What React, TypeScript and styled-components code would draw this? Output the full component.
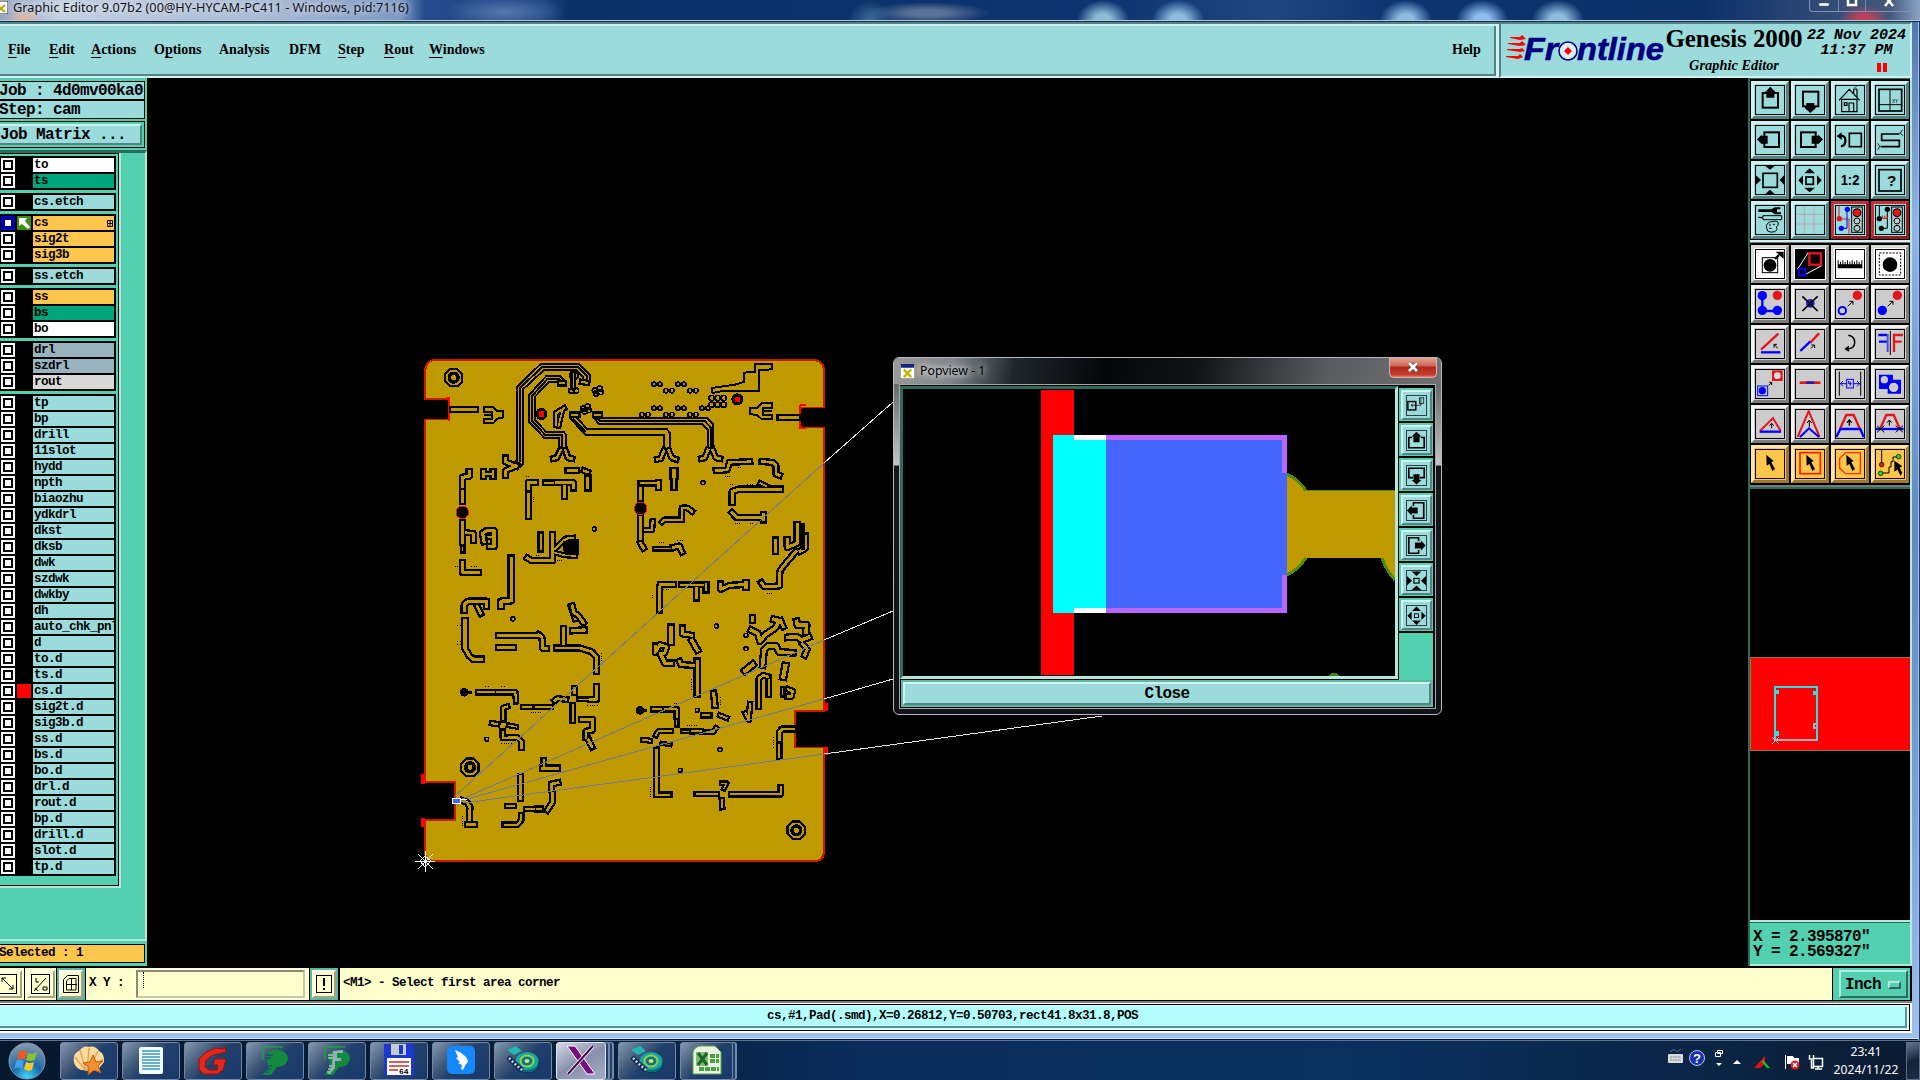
import React from "react";
import styled, { createGlobalStyle, css } from "styled-components";

const MONO = `"Liberation Mono", "DejaVu Sans Mono", monospace`;
const SERIF = `"Liberation Serif", "DejaVu Serif", serif`;
const SANS = `"Noto Sans", "Open Sans", sans-serif`;

const c = {
  cyan: "#9bdbdb",
  cyanHi: "#d0f2f2",
  cyanLo: "#538383",
  teal: "#53d0b0",
  tealMid: "#5cb8a0",
  tealHi: "#b4e8dc",
  tealLo: "#2c6c5c",
  orange: "#ffc64d",
  cream: "#ffffcc",
  gold: "#bf9900",
  red: "#ff0000",
};

const mono7 = css`
  font-family: ${MONO};
  font-weight: bold;
  font-size: 12.6px;
  letter-spacing: -0.56px;
`;
const mono9 = css`
  font-family: ${MONO};
  font-weight: bold;
  font-size: 16px;
  letter-spacing: -0.6px;
`;

const Global = createGlobalStyle`
  html, body { margin: 0; padding: 0; background: #000; overflow: hidden; }
  * { box-sizing: border-box; }
  svg { display: block; flex: none; }
`;

const Screen = styled.div`
  width: 1920px;
  height: 1080px;
  display: flex;
  flex-direction: column;
  overflow: hidden;
  color: #000;
`;

/* ---------- title bar ---------- */
const TitleBar = styled.header`
  height: 22px;
  flex: none;
  display: flex;
  justify-content: space-between;
  border-bottom: 1px solid #122c50;
  box-shadow: inset 0 -1px #b8cbe2;
  background:
    radial-gradient(ellipse 22px 20px at 870px 20px, #3c6c94, transparent),
    radial-gradient(ellipse 62px 11px at 928px 13px, #7484a0c0 30%, transparent),
    radial-gradient(ellipse 26px 20px at 1103px 20px, #8cbcd8 30%, transparent),
    radial-gradient(ellipse 26px 20px at 1178px 20px, #8cbce0 30%, transparent),
    radial-gradient(ellipse 26px 20px at 1406px 20px, #8cbce0 30%, transparent),
    radial-gradient(ellipse 26px 20px at 1482px 20px, #8cbcf0 30%, transparent),
    radial-gradient(ellipse 26px 20px at 1558px 20px, #8cbce0 30%, transparent),
    radial-gradient(ellipse 26px 14px at 1864px 19px, #c04058 20%, transparent),
    radial-gradient(ellipse 18px 12px at 24px 20px, #e8b490, transparent),
    radial-gradient(ellipse 60px 16px at 505px 12px, #5878ac, transparent),
    linear-gradient(90deg, #98a8c4 0, #c4cfe0 60px, #a6b8d4 280px, #7c98c4 400px, #244c8c 425px, #1c4484 545px, #0a3068 570px, #0c3470 1100px, #1e4680 1270px, #0c3470 1400px, #0b3068 1700px, #44587c 1890px, #8ca4c4 1920px);
`;
const TitleText = styled.div`
  display: flex;
  align-items: center;
  height: 14px;
  gap: 5px;
  font: 12.7px/14px ${SANS};
  color: #10151c;
  white-space: nowrap;
  text-shadow: 0 0 6px #ffffffb0, 0 0 8px #ffffff80;
`;
const CaptionButtons = styled.div`
  display: flex;
  width: 104px;
  height: 12px;
  margin-right: 7px;
  border: 1px solid #7c94b4;
  border-top: 0;
  border-radius: 0 0 4px 4px;
`;
const Caption = styled.div<{ $w: number }>`
  width: ${(p) => p.$w}px;
  display: flex;
  justify-content: center;
  border-right: 1px solid #7088a8;
  &:last-child { border: 0; }
`;

/* ---------- window frame ---------- */
const WindowFrame = styled.div`
  height: 1018px;
  flex: none;
  display: flex;
  flex-direction: column;
  padding-right: 8px;
  padding-bottom: 7px;
  background: linear-gradient(180deg, #5078b0, #90b4e8 20%, #6088c0 50%, #7ca4dc 80%, #a0c0f0);
  box-shadow: inset -1px 0 #243c60, inset -2px 0 #a8c4ec, inset 0 -1px #101828, inset 0 -2px #d0e0f8;
`;
const Header = styled.div`
  display: flex;
  height: 56px;
  flex: none;
  background: ${c.cyanLo};
`;
const MenuBar = styled.nav`
  flex: 1;
  display: flex;
  align-items: center;
  margin-top: 2px;
  padding: 0 16px 3px 8px;
  gap: 17px;
  background: ${c.cyan};
  border-top: 2px solid ${c.cyanHi};
  border-right: 3px solid ${c.cyanHi};
  border-bottom: 2px solid ${c.cyanHi};
  box-shadow: inset -2px -2px ${c.cyanLo};
  font: bold 14px/18px ${SERIF};
`;
const MenuItem = styled.span<{ $w: number; $end?: boolean }>`
  width: ${(p) => p.$w}px;
  white-space: nowrap;
  ${(p) => p.$end && css`margin-left: auto;`}
  u { text-underline-offset: 3px; text-decoration-thickness: 1px; text-decoration-skip-ink: none; }
`;
const Brand = styled.div`
  width: 413px;
  display: flex;
  padding: 4px 3px 0 5px;
  background: ${c.cyan};
  border: 2px solid;
  border-color: ${c.cyanLo} ${c.cyanHi} ${c.cyanHi} ${c.cyanLo};
`;
const BrandTitle = styled.div`
  width: 136px;
  display: flex;
  flex-direction: column;
  align-items: center;
  white-space: nowrap;
  strong { font: bold 25px/25px ${SERIF}; letter-spacing: -0.1px; margin-top: -2px; }
  em { font: italic bold 14.4px/20px ${SERIF}; margin-top: 4px; }
`;
const Clock = styled.div`
  flex: 1;
  display: flex;
  flex-direction: column;
  align-items: center;
  ${mono9}
  font-size: 15px;
  letter-spacing: 0;
  font-style: italic;
  line-height: 15px;
  padding-left: 4px;
  white-space: nowrap;
`;
const Pause = styled.div`
  width: 10px;
  height: 9px;
  margin: 5px 0 0 50px;
  border: solid ${c.red};
  border-width: 0 4px;
`;

const Body = styled.div`
  display: flex;
  height: 890px;
  flex: none;
  background: #000;
  padding-bottom: 2px;
`;

/* ---------- left sidebar ---------- */
const Sidebar = styled.aside`
  width: 147px;
  display: flex;
  flex-direction: column;
  background: ${c.teal};
  padding: 3px 0 0;
`;
const InfoBox = styled.div<{ $bg?: string; $small?: boolean }>`
  height: 19px;
  flex: none;
  width: 145px;
  margin-top: ${(p) => (p.$small ? 3 : 0)}px;
  background: ${(p) => p.$bg || c.cyan};
  border: 1px solid #000;
  border-left: 0;
  ${(p) => (p.$small ? mono7 : mono9)}
  line-height: ${(p) => (p.$small ? 16 : 18)}px;
  white-space: pre;
  text-indent: -1px;
`;
const MatrixWrap = styled.div`
  width: 145px;
  height: 27px;
  flex: none;
  margin-top: 2px;
  padding: 2px 2px 2px 0;
  border: 1px solid #000;
  border-left: 0;
`;
const MatrixButton = styled.div`
  height: 21px;
  background: ${c.cyan};
  border: 2px solid;
  border-color: ${c.cyanHi} ${c.cyanLo} ${c.cyanLo} ${c.cyanHi};
  border-left: 0;
  ${mono9}
  line-height: 18px;
  white-space: pre;
`;
const LayerArea = styled.div`
  margin-top: 2px;
  height: 791px;
  flex: none;
  border-top: 3px solid ${c.tealLo};
  border-right: 2px solid ${c.tealHi};
  border-bottom: 2px solid ${c.tealHi};
`;
const LayerFrame = styled.div`
  width: 121px;
  height: 735px;
  padding-top: 3px;
  border-right: 2px solid ${c.tealHi};
  border-bottom: 2px solid ${c.tealHi};
  box-shadow: inset -1px -1px #000, inset 0 1px #000;
  display: flex;
  flex-direction: column;
  gap: 3px;
`;
const LayerGroup = styled.div`
  width: 116px;
  flex: none;
  background: #000;
  padding: 2px 0 2px 1px;
  display: flex;
  flex-direction: column;
  gap: 2px;
`;
const LayerRow = styled.div`
  display: flex;
  gap: 2px;
  height: 14px;
`;
const Check = styled.div<{ $on?: boolean }>`
  width: 14px;
  height: 14px;
  border: 2px solid ${(p) => (p.$on ? "#0000cc" : "#fff")};
  background: #fff;
  box-shadow: inset 0 0 0 2px ${(p) => (p.$on ? "#000080" : "#000")};
`;
const Swatch = styled.div<{ $bg: string }>`
  width: 14px;
  height: 14px;
  background: ${(p) => p.$bg};
`;
const LayerName = styled.div<{ $bg: string }>`
  width: 81px;
  height: 14px;
  display: flex;
  justify-content: space-between;
  align-items: center;
  padding: 0 1px;
  overflow: hidden;
  background: ${(p) => p.$bg};
  ${mono7}
  line-height: 14px;
`;

/* ---------- tool panel ---------- */
const Right = styled.aside`
  width: 164px;
  display: flex;
  flex-direction: column;
  border-left: 2px solid ${c.tealLo};
  border-right: 2px solid ${c.tealHi};
  background: #000;
`;
const ToolGrid = styled.div<{ $kind: "view" | "edit" }>`
  display: grid;
  grid-template-columns: repeat(4, 38px);
  grid-auto-rows: 38px;
  gap: 2px;
  padding: 2px 0 ${(p) => (p.$kind === "view" ? 1 : 2)}px 1px;
  flex: none;
  border-top: ${(p) => (p.$kind === "view" ? `1px solid ${c.tealLo}` : "1px solid #777")};
  border-bottom: 2px solid ${(p) => (p.$kind === "view" ? c.cyanHi : "#777")};
`;
const tone = {
  cyan: [c.cyan, c.cyanHi, c.cyanLo],
  red: [c.cyan, "#c83038", "#901c20"],
  white: ["#ffffff", "#d8d8d8", "#909090"],
  gray: ["#cccccc", "#f2f2f2", "#7c7c7c"],
  orange: [c.orange, "#ffe4a4", "#9c7830"],
} as const;
type Tone = keyof typeof tone;
const Tool = styled.div<{ $t: Tone }>`
  width: 38px;
  height: 38px;
  display: flex;
  padding: 1px;
  background: ${(p) => tone[p.$t][0]};
  border: 3px solid;
  border-color: ${(p) => {
    const [, hi, lo] = tone[p.$t];
    return `${hi} ${lo} ${lo} ${hi}`;
  }};
`;
const MiniMap = styled.div`
  flex: 1;
  border-top: 2px solid ${c.tealLo};
  border-bottom: 2px solid ${c.tealHi};
  padding-top: 168px;
`;
const MiniBoard = styled.div`
  height: 94px;
  background: ${c.red};
  border: 1px solid #9c7c10;
  border-width: 1px 0 1px 1px;
`;
const Coords = styled.div`
  height: 44px;
  flex: none;
  background: ${c.teal};
  border-top: 1px solid ${c.tealLo};
  border-bottom: 2px solid ${c.tealHi};
  padding: 7px 0 0 3px;
  ${mono9}
  line-height: 15px;
  white-space: pre;
`;

/* ---------- canvas & popup ---------- */
const Canvas = styled.main`
  position: relative;
  flex: 1;
  background: #000;
`;
const Popup = styled.section`
  position: absolute;
  left: 746px;
  top: 279px;
  width: 549px;
  height: 358px;
  display: flex;
  flex-direction: column;
  border: 1px solid #b4b8bc;
  border-radius: 6px;
  padding: 0 5px 5px;
  background:
    linear-gradient(100deg, #9a9a9a 0, #808488 60px, #20262c 120px, #050608 210px, #101214 300px, #5a5c60 430px, #707276 549px) top / 100% 26px no-repeat,
    linear-gradient(180deg, #606468 20px, #c4c4c4 107px, #14181c 108px, #101418);
  background-clip: padding-box;
`;
const PopTitle = styled.div`
  height: 26px;
  flex: none;
  display: flex;
  align-items: center;
  gap: 5px;
  font: 12.3px/14px ${SANS};
  color: #000;
  padding-left: 1px;
  & > span { text-shadow: 0 0 6px #fff, 0 0 10px #ffffffc0; }
`;
const PopClose = styled.div`
  width: 48px;
  height: 20px;
  margin: 0 -1px 0 auto;
  align-self: flex-start;
  display: flex;
  align-items: center;
  justify-content: center;
  padding-bottom: 2px;
  border: 1px solid #d8b4b0;
  border-top: 0;
  border-radius: 0 0 5px 5px;
  background: linear-gradient(180deg, #e4a090 0, #cc6858 8px, #b02818 9px, #c84030 17px, #e08070);
`;
const PopBody = styled.div`
  flex: 1;
  display: flex;
  flex-direction: column;
  border: 1px solid #a4a8ac;
  padding: 1px 2px 1px 0;
  background: #000;
`;
const PopMain = styled.div`
  display: flex;
  height: 294px;
`;
const PopView = styled.div`
  width: 498px;
  height: 293px;
  border: 3px solid;
  border-color: ${c.tealLo} ${c.tealHi} ${c.tealHi} ${c.tealLo};
`;
const PopTools = styled.div`
  flex: 1;
  display: flex;
  flex-direction: column;
  gap: 2px;
  background: #000;
  padding: 2px 0 0 1px;
`;
const PopTool = styled.div`
  height: 33px;
  flex: none;
  padding: 2px 1px 1px 2px;
  background: ${c.teal};
`;
const PopToolFace = styled.div`
  height: 30px;
  display: flex;
  align-items: center;
  justify-content: center;
  background: ${c.cyan};
  border: 2px solid;
  border-color: ${c.cyanHi} ${c.cyanLo} ${c.cyanLo} ${c.cyanHi};
`;
const PopFill = styled.div`
  flex: 1;
  background: ${c.teal};
`;
const CloseRow = styled.div`
  height: 27px;
  margin-left: 1px;
  padding: 2px;
  background: ${c.tealMid};
`;
const CloseButton = styled.div`
  height: 23px;
  background: ${c.cyan};
  border: 2px solid;
  border-color: ${c.cyanHi} ${c.cyanLo} ${c.cyanLo} ${c.cyanHi};
  text-align: center;
  ${mono9}
  line-height: 21px;
`;

/* ---------- prompt & status ---------- */
const Prompt = styled.div`
  height: 33px;
  flex: none;
  display: flex;
  background: ${c.cream};
  border-bottom: 1px solid #000;
  ${mono7}
  line-height: 30px;
  white-space: pre;
`;
const PromptTool = styled.div<{ $w: number; $bg?: string; $edge?: boolean }>`
  width: ${(p) => p.$w}px;
  height: 32px;
  display: flex;
  align-items: center;
  justify-content: ${(p) => (p.$edge ? "flex-end" : "center")};
  padding-right: ${(p) => (p.$edge ? 2 : 0)}px;
  overflow: hidden;
  background: ${(p) => p.$bg || c.cream};
  border-right: 1px solid #000;
`;
const PromptFace = styled.div<{ $w: number }>`
  width: ${(p) => p.$w}px;
  height: 28px;
  flex: none;
  display: flex;
  align-items: center;
  justify-content: center;
  background: ${c.cream};
  border: 2px solid;
  border-color: #ffffec #a4a484 #a4a484 #ffffec;
`;
const PromptLabel = styled.span`
  width: 46px;
  padding-left: 3px;
`;
const Entry = styled.div`
  width: 169px;
  height: 28px;
  margin: 0 3px 0 2px;
  border: 2px solid;
  border-color: #8c8c74 #c8c8a4 #c8c8a4 #8c8c74;
  outline: 1px solid #fffff0;
  padding: 0 0 0 5px;
`;
const Caret = styled.div`
  width: 3px;
  height: 16px;
  border-left: 1px dotted #000;
`;
const PromptText = styled.span`
  flex: 1;
  padding-left: 3px;
  border-left: 1px solid #000;
`;
const UnitWrap = styled.div`
  width: 80px;
  height: 32px;
  background: ${c.teal};
  border-left: 1px solid #000;
  border-right: 2px solid #000;
  padding: 2px 2px 2px 6px;
`;
const Unit = styled.div`
  height: 28px;
  display: flex;
  align-items: center;
  justify-content: space-between;
  padding: 1px 5px 0 4px;
  border: 2px solid;
  border-color: ${c.tealHi} ${c.tealLo} ${c.tealLo} ${c.tealHi};
  ${mono9}
  line-height: 22px;
`;
const UnitMark = styled.i`
  width: 13px;
  height: 8px;
  border: 2px solid;
  border-color: ${c.tealHi} ${c.tealLo} ${c.tealLo} ${c.tealHi};
`;
const StatusFrame = styled.div`
  flex: 1;
  background: #fff;
  border-top: 2px solid #788484;
  padding: 1px 2px 2px 0;
`;
const Status = styled.div`
  height: 27px;
  border: solid #000;
  border-width: 1px 1px 1px 0;
  padding: 2px;
  padding-left: 0;
  background: #d8ffff;
`;
const StatusInner = styled.div`
  height: 21px;
  background: #b3ffff;
  border: solid #609090;
  border-width: 0 2px 2px 0;
  text-align: center;
  ${mono7}
  line-height: 19px;
`;

/* ---------- taskbar ---------- */
const Taskbar = styled.footer`
  height: 40px;
  flex: none;
  display: flex;
  align-items: center;
  border-top: 1px solid #5c7490;
  background: linear-gradient(90deg, #06182e, #08203c 30%, #0a2c5c 45%, #0a3060 70%, #0a2444 90%, #0a1a30);
`;
const Orb = styled.div`
  width: 60px;
  display: flex;
  padding-left: 8px;
`;
const Task = styled.div<{ $active?: boolean; $stack?: boolean }>`
  width: 58px;
  height: 38px;
  margin-right: 4px;
  padding-bottom: 2px;
  display: flex;
  align-items: center;
  justify-content: center;
  border: 1px solid #7488a4;
  border-radius: 3px;
  background: linear-gradient(135deg, #8498b0 0, #405878 35%, #20406c 52%, #18386a 100%);
  ${(p) =>
    p.$stack &&
    css`
      width: ${p.$active ? 50 : 53}px;
      margin-right: ${p.$active ? 12 : 9}px;
      box-shadow: 3px 0 0 -1px #20406c, 4px 0 #7488a4;
    `}
  ${(p) =>
    p.$active &&
    css`
      border-color: #e0e4ec;
      background: linear-gradient(150deg, #d4d8e4, #8890ac 50%, #a4acc4);
      box-shadow: 3px 0 0 -1px #20406c, 4px 0 #7488a4, 7px 0 0 -1px #20406c, 8px 0 #7488a4;
    `}
`;
const Tray = styled.div`
  margin-left: auto;
  display: flex;
  align-items: center;
`;
const TrayTime = styled.div`
  width: 80px;
  text-align: center;
  color: #fff;
  font: 12.2px/18px ${SANS};
`;
const ShowDesktop = styled.div`
  width: 14px;
  height: 38px;
  border: 1px solid #5c7088;
  background: linear-gradient(160deg, #64748c, #142438 50%, #1c2c44);
`;

/* ---------- icons ---------- */
const S = "#000";
const B = "#0000ff";
const R = "#e8141c";

const icons: Record<string, React.ReactNode> = {
  up: <><rect x="23" y="24" width="46" height="44" fill="none" stroke={S} strokeWidth="6" /><path d="M46 5 64 23H58V38H34V23H28Z" /></>,
  down: <><rect x="24" y="20" width="46" height="44" fill="none" stroke={S} strokeWidth="6" /><path d="M46 84 62 70V66H58V54H34V66H30V70Z" /></>,
  home: <><path d="M12 46 43 13 74 46M20 43V80H66V43H20M42 80V54H56V80M28 53H36V61H28ZM56 26V12M66 36V12M56 12H66" fill="none" stroke={S} strokeWidth="3.500" /><path d="M58 8 66 3" stroke={S} strokeWidth="2" /></>,
  xy: <><rect x="12" y="13" width="68" height="65" fill="none" stroke={S} strokeWidth="5" /><path d="M45 13V78M12 59H80" stroke={S} strokeWidth="3" /><text x="51" y="54" fontSize="15" letterSpacing="0" fontFamily="Liberation Mono, monospace">XY</text></>,
  left: <><rect x="28" y="22" width="44" height="44" fill="none" stroke={S} strokeWidth="6" /><path d="M6 43 20 29V32H38V56H20V58Z" /></>,
  right: <><rect x="18" y="22" width="44" height="44" fill="none" stroke={S} strokeWidth="6" /><path d="M84 43 70 29V32H50V56H70V58Z" /></>,
  undo: <><rect x="43" y="25" width="36" height="40" fill="none" stroke={S} strokeWidth="5" /><path d="M14 33H24Q32 36 31 50 30 62 18 64" fill="none" stroke={S} strokeWidth="7" /><path d="M5 33 20 22V45Z" /></>,
  snake: <><path d="M19 65H73V46H20V27H73" fill="none" stroke={S} strokeWidth="5" /><path d="M8 55 14 65 8 75M14 65H20M82 14 76 25H72M76 25 84 32" fill="none" stroke={S} strokeWidth="2.5" /></>,
  fit: <><rect x="24" y="25" width="43" height="42" fill="none" stroke={S} strokeWidth="5" /><path d="M30 2H60L45 14ZM30 88H60L45 74ZM2 30V60L18 45ZM88 30V60L74 45Z" /></>,
  expand: <><rect x="33" y="36" width="22" height="22" fill="none" stroke={S} strokeWidth="5" /><path d="M28 25H60L44 10ZM28 68H60L44 82ZM24 31V61L10 46ZM66 31V61L80 46Z" /></>,
  ratio: <text x="45" y="61" textAnchor="middle" textLength="56" lengthAdjust="spacingAndGlyphs" fontSize="46" fontWeight="bold" fontFamily="Liberation Sans, sans-serif">1:2</text>,
  help: <><rect x="12" y="14" width="66" height="64" fill="none" stroke={S} strokeWidth="5" /><text x="50" y="63" textAnchor="middle" fontSize="46" fontFamily="Liberation Sans, sans-serif" fontWeight="bold">?</text></>,
  tools: <><path d="M10 13H54V21H10ZM50 12 60 7H76V13H66V22H78V28H60L50 22Z" /><path d="M10 37H24V32H80V44H24V39Z M34 66Q34 52 50 50 68 46 70 54 70 62 64 66 70 74 60 80 46 84 38 78Z" fill="none" stroke={S} strokeWidth="3" /><path d="M42 60H48M54 58H60M42 70H50" stroke={S} strokeWidth="3" /></>,
  grid: <path d="M28 0V90M57 0V90M0 28H90M0 57H90" stroke="#c4a4b4" strokeWidth="3" />,
  light: <><path d="M12 0V40M42 42H14" stroke={R} strokeWidth="3" /><path d="M42 42V86" stroke={R} strokeWidth="3" /><path d="M36 12V70H20" fill="none" stroke={B} strokeWidth="3" /><circle cx="13" cy="41" r="8" fill={R} /><circle cx="37" cy="13" r="8" fill={B} /><circle cx="19" cy="70" r="8" fill={B} /><rect x="50" y="6" width="32" height="76" fill="#b4cccc" stroke={S} strokeWidth="3" /><circle cx="66" cy="23" r="12" fill={R} stroke={S} strokeWidth="3" /><g fill="none" stroke={S} strokeWidth="3"><circle cx="66" cy="48" r="9" /><circle cx="66" cy="70" r="9" /></g></>,
  light2: <><path d="M13 0V40M37 12V70H20" fill="none" stroke={S} strokeWidth="3" /><path d="M20 40H38M22 32V40M29 32V40M36 32V40" stroke={R} strokeWidth="3" /><circle cx="13" cy="41" r="8" /><circle cx="37" cy="13" r="8" /><circle cx="19" cy="70" r="8" /><rect x="50" y="6" width="32" height="76" fill="#b4cccc" stroke={S} strokeWidth="3" /><circle cx="66" cy="23" r="12" fill={R} stroke={S} strokeWidth="3" /><g fill="none" stroke={S} strokeWidth="3"><circle cx="66" cy="48" r="9" /><circle cx="66" cy="70" r="9" /></g></>,
  zoompad: <><rect x="22" y="26" width="46" height="45" fill="none" stroke={S} strokeWidth="3" /><circle cx="45" cy="49" r="19" /><path d="M60 30 72 18" stroke={S} strokeWidth="7" /><path d="M62 8H86V30Z" /></>,
  popview: <><rect width="90" height="90" /><path d="M8 60 40 10M28 78 80 50" stroke="#fff" strokeWidth="3" /><rect x="43" y="13" width="35" height="34" fill="none" stroke={R} strokeWidth="7" /><rect x="12" y="60" width="19" height="19" fill="none" stroke={B} strokeWidth="6" /></>,
  ruler: <path d="M8 58V34H11V46H15V38H18V46H22V34H25V46H29V38H32V46H36V34H39V46H43V38H46V46H50V34H53V46H57V38H60V46H64V34H67V46H71V38H74V46H79V34H82V58Z" />,
  dashpad: <><rect x="13" y="12" width="64" height="66" fill="none" stroke={S} strokeWidth="3" strokeDasharray="6 4" /><circle cx="45" cy="47" r="22" /></>,
  pads: <><path d="M22 18V66H68" fill="none" stroke={B} strokeWidth="7" /><circle cx="22" cy="20" r="14" fill={B} /><circle cx="22" cy="64" r="14" fill={B} /><circle cx="67" cy="64" r="14" fill={B} /><circle cx="67" cy="19" r="14" fill={R} /></>,
  del: <><circle cx="46" cy="43" r="13" fill="#2020c0" /><path d="M22 22 68 66M68 22 22 66" stroke={S} strokeWidth="5" /></>,
  copy: <><circle cx="67" cy="19" r="14" fill={R} /><circle cx="22" cy="65" r="11" fill="none" stroke={B} strokeWidth="6" /><path d="M38 52 53 38M43 37H54V47" fill="none" stroke={S} strokeWidth="3" /></>,
  move: <><circle cx="67" cy="19" r="14" fill={R} /><circle cx="22" cy="64" r="14" fill={B} /><path d="M38 52 53 38M43 37H54V47" fill="none" stroke={S} strokeWidth="3" /></>,
  angle: <><path d="M18 62 70 14" stroke={R} strokeWidth="7" /><path d="M18 70H76" stroke={B} strokeWidth="7" /><path d="M68 58 58 47M57 56V46H66" fill="none" stroke={S} strokeWidth="3" /></>,
  line: <><path d="M46 41 72 13" stroke={R} strokeWidth="7" /><path d="M16 66 46 37" stroke={B} strokeWidth="7" /><path d="M48 58 58 48M49 48H59V57" fill="none" stroke={S} strokeWidth="3" /></>,
  rotate: <path d="M40 19Q60 22 59 42 58 60 34 60M42 52 32 60 42 66" fill="none" stroke={S} strokeWidth="4.5" />,
  mirror: <><path d="M10 18H37M12 38H37" fill="none" stroke={B} strokeWidth="7" /><path d="M38 15V69" stroke="#4848ff" strokeWidth="6" /><path d="M46 6V78" stroke={S} strokeWidth="3" /><path d="M57 69V18H84M57 38H80" fill="none" stroke={R} strokeWidth="7" /></>,
  subst: <><rect x="53" y="6" width="28" height="28" fill={R} stroke={R} strokeWidth="4" /><circle cx="67" cy="20" r="10" fill="#ddd" /><rect x="8" y="51" width="30" height="29" fill="none" stroke={B} strokeWidth="3" /><circle cx="22" cy="65" r="11" fill={B} /><path d="M41 49 50 41M43 40H50V48" fill="none" stroke={S} strokeWidth="3" /></>,
  seg: <><path d="M14 41H76" stroke={R} strokeWidth="8" /><path d="M34 41H58" stroke="#2020b0" strokeWidth="8" /></>,
  space: <><path d="M13 8V80M77 8V80" stroke={S} strokeWidth="3" /><path d="M16 44H34M24 36 16 44 24 52M56 44H74M66 36 74 44 66 52" fill="none" stroke={B} strokeWidth="3" /><rect x="35" y="31" width="20" height="26" fill="none" stroke={B} strokeWidth="3" /><path d="M46 38V50M41 36V44H50" fill="none" stroke={B} strokeWidth="3" /></>,
  cover: <><path d="M12 17H54V32H78V74H38V60H12Z" fill={B} /><circle cx="28" cy="32" r="11" fill="#ccc" /><circle cx="56" cy="55" r="14" fill="#ccc" /></>,
  tri: <><path d="M15 66 54 27 77 66" fill="none" stroke={R} strokeWidth="6" /><path d="M14 68H78" stroke={B} strokeWidth="7" /><path d="M50 58V44M43 50 50 43 57 50" fill="none" stroke={S} strokeWidth="3" /></>,
  peak: <><path d="M8 84 41 6 74 84" fill="none" stroke={R} strokeWidth="6" /><path d="M15 84 42 58 72 84" fill="none" stroke={B} strokeWidth="6" /><path d="M43 54V34M36 42 43 33 50 42" fill="none" stroke={S} strokeWidth="3" /></>,
  trap: <><path d="M16 58 34 18H56L74 58" fill="none" stroke={R} strokeWidth="7" /><path d="M4 84 16 60H76L86 84" fill="none" stroke={B} strokeWidth="7" /><path d="M43 50V34M36 41 43 33 50 41" fill="none" stroke={S} strokeWidth="4" /></>,
  trap2: <><path d="M16 58 34 18H56L74 58" fill="none" stroke={R} strokeWidth="7" /><path d="M2 60H86" stroke={B} strokeWidth="7" /><path d="M6 50 28 70M28 50 6 70M62 50 84 70M84 50 62 70M43 50V34M36 41 43 33 50 41" fill="none" stroke={S} strokeWidth="3" /></>,
  arrow: <path d="M34 17 56 36 49 40 60 60 52 66 43 45 35 50Z" />,
  arrowbox: <><rect x="15" y="11" width="61" height="63" fill="none" stroke="#ff1c00" strokeWidth="5" /><path d="M34 17 56 36 49 40 60 60 52 66 43 45 35 50Z" /></>,
  arrowpoly: <><path d="M32 11H76V74H32L14 58V28Z" fill="none" stroke="#ff3000" strokeWidth="4" /><path d="M34 17 56 36 49 40 60 60 52 66 43 45 35 50Z" /></>,
  arrownet: <><path d="M20 0V46M20 72H42V54H48V38H54V24H70" fill="none" stroke={S} strokeWidth="3" /><circle cx="20" cy="47" r="7" fill="#c03010" stroke={S} strokeWidth="2" /><circle cx="17" cy="73" r="7" fill="#20d030" stroke={S} strokeWidth="2" /><circle cx="71" cy="23" r="7" fill="#20d030" stroke={S} strokeWidth="2" /><path d="M58 35 82 52 74 56 82 72 76 80 68 62 58 68Z" /></>,
  track: <><rect x="8" y="28" width="34" height="36" fill="none" stroke={S} strokeWidth="6" /><rect x="58" y="12" width="18" height="24" fill="none" stroke={S} strokeWidth="3" /><path d="M64 14V44H22M30 36 22 44 30 52" fill="none" stroke={S} strokeWidth="3" /></>,
  upB: <><path d="M26 32H12V76H78V32H64" fill="none" stroke={S} strokeWidth="7" /><path d="M45 8 66 28H58V52H32V28H24Z" /></>,
  downB: <><path d="M30 54H12V14H78V54H60" fill="none" stroke={S} strokeWidth="7" /><path d="M45 84 66 64H58V40H32V64H24Z" /></>,
  leftB: <><path d="M32 26V12H76V78H32V64" fill="none" stroke={S} strokeWidth="7" /><path d="M4 45 24 24V32H50V58H24V66Z" /></>,
  rightB: <><path d="M54 26V12H12V78H54V64" fill="none" stroke={S} strokeWidth="7" /><path d="M84 45 64 24V32H38V58H64V66Z" /></>,
  shrinkB: <><rect x="34" y="36" width="22" height="20" fill="none" stroke={S} strokeWidth="5" /><path d="M24 6H66L45 26ZM24 86H66L45 66ZM4 26V66L26 46ZM86 26V66L64 46Z" /></>,
  growB: <><rect x="36" y="38" width="18" height="16" fill="none" stroke={S} strokeWidth="4" /><path d="M26 26H64L45 6ZM26 66H64L45 86ZM24 28V64L6 46ZM66 28V64L84 46Z" /></>,
};

const Icon = ({ name, size = 30 }: { name: string; size?: number }) => (
  <svg width={size} height={size} viewBox="0 0 90 90">
    {icons[name]}
    <rect x="1.5" y="1.5" width="87" height="87" fill="none" stroke="#000" strokeWidth="3" shapeRendering="crispEdges" />
  </svg>
);

const viewTools: [string, Tone][] = [
  ["up", "cyan"], ["down", "cyan"], ["home", "cyan"], ["xy", "cyan"],
  ["left", "cyan"], ["right", "cyan"], ["undo", "cyan"], ["snake", "cyan"],
  ["fit", "cyan"], ["expand", "cyan"], ["ratio", "cyan"], ["help", "cyan"],
  ["tools", "cyan"], ["grid", "cyan"], ["light", "red"], ["light2", "red"],
];
const editTools: [string, Tone][] = [
  ["zoompad", "white"], ["popview", "white"], ["ruler", "white"], ["dashpad", "white"],
  ["pads", "gray"], ["del", "gray"], ["copy", "gray"], ["move", "gray"],
  ["angle", "gray"], ["line", "gray"], ["rotate", "gray"], ["mirror", "gray"],
  ["subst", "gray"], ["seg", "gray"], ["space", "gray"], ["cover", "gray"],
  ["tri", "gray"], ["peak", "gray"], ["trap", "gray"], ["trap2", "gray"],
  ["arrow", "orange"], ["arrowbox", "orange"], ["arrowpoly", "orange"], ["arrownet", "orange"],
];

/* ---------- layers ---------- */
const W = "#ffffff", G = "#00a57c", C = c.cyan, O = c.orange, D = "#9ab4bf", L = "#d9d9d9";
const layers: [string, string][][] = [
  [["to", W], ["ts", G]],
  [["cs.etch", C]],
  [["cs", O], ["sig2t", O], ["sig3b", O]],
  [["ss.etch", C]],
  [["ss", O], ["bs", G], ["bo", W]],
  [["drl", D], ["szdrl", D], ["rout", L]],
  ["tp", "bp", "drill", "11slot", "hydd", "npth", "biaozhu", "ydkdrl", "dkst", "dksb", "dwk", "szdwk", "dwkby", "dh", "auto_chk_pnl", "d", "to.d", "ts.d", "cs.d", "sig2t.d", "sig3b.d", "ss.d", "bs.d", "bo.d", "drl.d", "rout.d", "bp.d", "drill.d", "slot.d", "tp.d"].map((n) => [n, C] as [string, string]),
];

/* ---------- board artwork ---------- */
const upper: [string, number?][] = [
  ["128,179 198,179", 17], ["1110,202 1164,202", 17],
  ["287,324 287,336 318,348"], ["287,376 287,362 318,348"],
  ["178,366 178,378 158,382 158,410", 19], ["158,424 158,455", 19], ["158,519 158,578", 19], ["158,592 158,602", 14], ["168,548 190,550 190,572", 17],
  ["220,364 220,380", 18], ["228,372 246,372", 14], ["249,364 249,380", 18],
  ["222,575 218,550 230,542 252,542 252,590 240,590", 19], ["232,560 254,562", 14],
  ["158,638 158,668 206,668", 18],
  ["304,625 304,752 273,754 273,768", 20],
  ["163,782 163,764 174,754 230,754 230,770", 19], ["202,770 212,790", 18],
  ["356,500 356,432", 18], ["356,416 356,398 376,398", 19],
  ["406,398 428,398", 16], ["440,398 490,398 490,414", 18], ["463,408 463,440", 18],
  ["474,362 500,362", 18], ["522,362 533,366", 17], ["533,385 533,413", 20],
  ["392,554 392,598", 16], ["428,554 428,632 365,632 352,624", 18], ["435,596 468,566 488,564", 16], ["435,608 464,616 496,618", 14],
  ["692,444 692,415", 19], ["692,400 745,400", 16], ["746,398 746,412", 18], ["692,502 692,566", 18], ["692,580 700,594", 18], ["704,540 726,540 728,514", 16],
  ["792,364 792,376", 24], ["792,380 792,412", 18],
  ["756,516 762,510 816,510 816,474 832,474 846,484", 17],
  ["734,596 782,596", 14], ["790,592 808,588 816,606", 18],
  ["918,362 952,360 958,337 1020,335", 17], ["1056,335 1088,337 1098,348 1098,372 1108,376", 18],
  ["967,456 967,424 985,418 1110,418", 19], ["1052,400 1068,408", 16],
  ["966,488 980,503 1056,503", 18], ["1061,494 1061,510", 18],
  ["1097,570 1097,604", 18], ["1132,570 1132,592 1162,580 1162,524", 19], ["1186,558 1186,596 1170,604", 18],
  ["1158,604 1124,644 1110,662 1108,708 1062,710 1054,698", 18],
  ["749,780 749,712", 18], ["752,703 790,703", 17], ["814,704 880,704", 15], ["888,704 888,720", 18], ["860,716 860,744", 18],
  ["932,702 932,718 958,706 1000,704", 18], ["1008,698 1008,712", 20],
  ["484,770 496,806", 18], ["452,300 440,324 430,326", 17], ["466,300 474,324 486,326", 17],
  ["762,302 752,326 742,328", 17], ["776,302 786,324 798,328", 17], ["894,300 884,324 874,326", 17], ["908,300 918,324 930,326", 17],
  ["490,70 490,112", 14], ["516,96 530,98", 16], ["450,100 462,100", 16], ["462,175 438,190 438,224", 16], ["456,186 450,208 446,228", 14], ["486,194 502,194", 16], ["556,194 570,194", 16],
];
const lower: [string, number?][] = [
  ["165,62 165,145 178,168 190,178 214,178", 19],
  ["266,107 382,107", 17], ["386,104 396,112 398,145 410,145", 18], ["266,143 310,143", 17],
  ["460,86 460,132", 17], ["440,144 510,144 545,155 560,172 560,214", 18],
  ["487,18 492,38 506,48 520,68", 18], ["522,90 488,92", 19],
  ["783,82 783,126", 19], ["818,84 818,102 844,106", 18], ["846,122 862,150", 20],
  ["736,138 736,158 750,134 770,140 764,160 752,160", 18], ["755,168 766,190 784,190", 20],
  ["808,184 812,194 852,196", 18], ["862,184 862,284", 19],
  ["1024,90 1044,100 1050,124 1066,104 1096,84 1108,62 1092,58", 20], ["1112,62 1120,80", 18], ["1027,52 1027,62", 18],
  ["1058,196 1062,150 1074,138 1098,138 1106,156 1148,158", 20],
  ["1160,64 1162,76 1190,74 1188,96", 20], ["1134,112 1160,110 1176,120 1196,112", 20], ["1178,132 1192,148 1184,166", 18],
  ["1006,212 1028,194", 22],
  ["1047,320 1047,234 1060,226 1074,230", 17], ["1076,240 1076,284", 16],
  ["1126,198 1120,230", 22], ["1118,266 1118,284", 14], ["1134,268 1148,274 1144,290 1134,290", 17],
  ["204,277 252,277", 16], ["262,277 316,277 318,304", 16], ["338,321 364,321", 14], ["376,321 424,321", 14], ["292,320 280,324 280,358", 16],
  ["434,302 442,296 468,298", 17], ["506,298 536,298", 14], ["542,298 560,298 560,260", 18], ["493,266 493,278", 17], ["488,316 488,364", 15],
  ["514,358 548,358 548,390 528,394 528,412", 18], ["536,420 546,440", 18],
  ["246,370 262,372", 16], ["296,376 318,380", 14], ["279,396 279,414 322,412 334,424 334,442", 17],
  ["730,328 752,328", 16], ["764,328 800,328 800,350", 16], ["800,362 800,374", 14], ["738,406 744,394 784,394", 15], ["818,394 834,394", 14], ["846,394 872,394", 16], ["890,396 910,396 918,384", 14],
  ["911,280 915,316", 19], ["880,346 898,346", 16], ["930,346 950,354", 15], ["700,420 720,422", 15], ["756,430 780,434", 12], ["1020,312 1016,360 1006,340", 16],
  ["739,450 739,578", 17], ["739,584 778,584", 16], ["860,583 920,583", 15], ["964,583 1112,583 1112,562", 16], ["936,550 950,550 942,566", 14], ["935,600 937,622", 15],
  ["1150,387 1116,387 1108,396 1108,420", 18], ["1108,434 1108,470", 16],
  ["402,482 402,496", 17], ["398,505 442,505", 19],
  ["331,530 331,596", 18], ["444,548 424,552 424,568", 18], ["428,580 428,606 412,630", 18],
  ["290,618 312,618", 14], ["348,627 374,627", 14], ["382,627 392,627", 18], ["284,674 322,674 334,660 334,646", 16],
  ["158,602 172,608 180,622 178,660", 18], ["172,674 194,674", 17],
];
const vias: [number, number][] = [[741, 103], [777, 122], [813, 103], [849, 122], [741, 175], [705, 194], [777, 194], [813, 175], [849, 194], [885, 175]];
const pads = [[905, 144], [923, 144], [941, 144], [905, 164], [923, 164], [941, 164], [555, 122], [569, 116], [558, 130], [572, 126], [520, 176], [533, 170], [524, 184], [536, 180], [484, 122], [498, 122]];

const Traces = ({ items }: { items: [string, number?][] }) => (
  <g fill="none" strokeLinecap="square" strokeLinejoin="round">
    {items.map(([p, w = 18], i) => <polyline key={i} points={p} stroke="#000" strokeWidth={w + 4} />)}
    {items.map(([p, w = 18], i) => <polyline key={i} points={p} stroke={c.gold} strokeWidth={w - 9.5} />)}
  </g>
);

const Target = ({ x, y }: { x: number; y: number }) => (
  <g fill="none" stroke="#000">
    <path d={`M${x - 11} ${y - 26}h22l15 15v22l-15 15h-22l-15-15v-22z`} strokeWidth="7" />
    <circle cx={x} cy={y} r="13" strokeWidth="11" />
  </g>
);

const Board = () => (
  <svg width="1601" height="888" viewBox="147 78 1601 888" shapeRendering="crispEdges">
    <path d="M434 360H814Q824 361 824 371V408H800V427H824V711H795V747H824V851Q824 861 814 861H434Q425 861 425 851V820H455V782H425V419H449V399H425V371Q426 361 434 360Z" fill={c.gold} stroke="#d01800" strokeWidth="2" />
    <path d="M424 400H448V419H424ZM802 408H827V427H802ZM796 712H828V747H796ZM424 784H454V819H424Z" fill="#000" />
    <path d="M449 397V421M449 398H446M800 405V429M800 405H806M800 428H806" stroke={c.red} strokeWidth="2" />
    <path d="M421 774H425V784H421ZM421 818H425V827H421ZM824 703H828V711H824ZM824 747H828V755H824Z" fill={c.red} />
    <g transform="translate(410 350) scale(.33333)">
      <g fill="none" stroke="#000" strokeWidth="6">
        <path d="M321 336V110L392 42H508L541 76V100M330 336V114L396 51H504L532 80V94" />
        <path d="M339 345V118L401 61H500L520 82V92" />
        <path d="M357 215V135L410 77H448L468 96M366 212V138L413 86H446L460 102M375 210V140L416 96H440L446 104" />
        <path d="M357 215 402 263H448V294M366 212 405 254H456V294M375 210 408 245H460L468 254V294" />
        <path d="M550 200 566 222H876L893 240V294M560 202 570 213H884L902 232V294M568 204H890L910 224V294" />
        <path d="M480 204 526 254H762V294M498 200 531 237H770L780 248V294M489 206 527 245" />
        <path d="M296 350 318 334 336 346 322 356Z" />
        <path d="M905 128V114L980 103 1003 95V68L1035 65V42H1087V58L1048 60V122H940L905 130" />
        <path d="M222 172H250L262 184H280V202L262 206 250 220H222V208H246V186H222ZM222 196H248" />
        <path d="M1085 158H1056L1042 174H1020V192L1042 196 1054 206H1085V194H1060V174H1085ZM1060 184H1085" />
        <path d="M480 68H504V80L496 90M480 68V80L486 90" />
      </g>
      <Traces items={upper} />
      <g fill="#000">
        <path d="M460 574 484 568H506V614H480L458 602ZM1166 520H1186V600H1172Z" />
        <circle cx="394" cy="192" r="18" /><circle cx="982" cy="148" r="18" />
        <g stroke={R} strokeWidth="3"><circle cx="157" cy="487" r="19" /><circle cx="692" cy="475" r="19" /></g>
      </g>
      <path d="M386 184H402V200H386ZM974 140H990V156H974Z" fill={c.red} />
      <g fill="none" stroke="#000" strokeWidth="5">
        {vias.map(([x, y]) => (
          <g key={`${x}-${y}`}><circle cx={x - 9} cy={y} r="6.500" /><circle cx={x + 9} cy={y} r="6.500" /></g>
        ))}
        {pads.map(([x, y]) => <circle key={`${x}-${y}`} cx={x} cy={y} r="8" />)}
        <circle cx="553" cy="537" r="6" /><circle cx="879" cy="398" r="6" />
      </g>
      <path d="M348 380H364M372 440V456M134 650H150M184 650H200M378 616H394M440 632H456M746 577H762M802 572H818M960 404H976M1012 404H1028M974 520H990M1020 520H1036M984 352H998M944 380H960M728 734V746M760 720H778M1070 730H1086" stroke="#000" strokeWidth="3" strokeDasharray="3 4" />
      <Target x={131} y={83} />
    </g>
    <g transform="translate(410 600) scale(.33333)">
      <Traces items={lower} />
      <g fill="none" stroke="#000" strokeWidth="5">
        {[[309, 57], [919, 78], [1008, 106], [1008, 146], [230, 418], [930, 449], [811, 511], [862, 331]].map(([x, y]) => <circle key={`${x}-${y}`} cx={x} cy={y} r="6" />)}
      </g>
      <g fill="#000"><circle cx="163" cy="277" r="13" /><circle cx="690" cy="331" r="13" /><path d="M170 273H186V281H170ZM698 327H712V335H698Z" /></g>
      <path d="M142 76H154M142 126H154M142 134H154M576 160V190M844 238V272M226 260H238M274 260H286M532 316H568M362 338H396M274 430H310M792 312H806M830 378H862M932 292V322M1090 412V444M722 560V592M158 648V680" stroke="#000" strokeWidth="3" strokeDasharray="3 4" />
      <Target x={180} y={502} />
      <Target x={1159} y={691} />
    </g>
    <g stroke="#747a94" strokeWidth="1">
      <path d="M454 797 824 463M460 800 824 640M460 801 824 699M464 803 824 754" />
      <path d="M824 463 893 402M824 640 893 611M824 699 893 679M824 754 1102 716" stroke="#e8e8e8" />
    </g>
    <rect x="452.500" y="798.500" width="8" height="5" fill="#4466ff" stroke="#fff" />
    <path d="M461 799H467" stroke="#fff" />
    <path d="M415 861.500H435M425.500 851V872M418 854 433 869M433 854 418 869M420 861 425 856 431 861 425 867Z" stroke="#fff" fill="none" />
  </svg>
);

const PopArt = () => (
  <svg width="492" height="287" viewBox="903 389 492 287" shapeRendering="crispEdges">
    <rect x="1041" y="390" width="33" height="285" fill={c.red} />
    <rect x="1053" y="435" width="53" height="178" fill="#00ffff" />
    <path d="M1074 435h32v5h-32zM1074 608h32v5h-32z" fill="#fff" />
    <path d="M1106 435H1287V613H1106Z" fill="#4466ff" />
    <path d="M1106 435H1287V473H1282V440H1106ZM1106 613H1287V575H1282V608H1106Z" fill="#b866ff" />
    <path d="M1287 473Q1298 478 1306 490.500H1395V580Q1387 570 1381 557.500H1306Q1298 570 1287 575Z" fill={c.gold} />
    <path d="M1306 490.500H1395" stroke="#4c8c10" />
    <path d="M1287 474Q1298 479 1306 490.500M1306 558Q1298 570 1287 575M1382 558Q1386 570 1395 580" fill="none" stroke="#4c8c10" strokeWidth="3" />
    <path d="M1328 676 1331 673H1336L1339 676Z" fill="#4c7c20" />
  </svg>
);

const XIcon = ({ size }: { size: number }) => (
  <svg width={size} height={size} viewBox="0 0 16 16"><rect width="16" height="16" fill="#fff" stroke="#404040" /><rect x="1" width="14" height="4" fill="#102880" /><path d="M4 6 12 14M12 6 4 14" stroke="#c8b400" strokeWidth="2.500" /></svg>
);

/* ---------- taskbar pictures ---------- */
const Leaf = ({ speck }: { speck?: boolean }) => (
  <svg width="32" height="32" viewBox="0 0 32 32"><path d="M4 16V3H24" fill="none" stroke="#18a048" strokeWidth="1.500" /><path d="M8 10Q13 4 20 6 29 8 29 15 28 22 18 23L12 31H3L9 25Z" fill="#128c3c" /><path d="M7 11H14M7 14H12M8 22H13M7 25H12M6 28H10" stroke={speck ? "#a0c8b4" : "#244c74"} strokeWidth="1.500" />{speck && <path d="M12 7 22 6V9H16V14H20V17H14V24L9 30H7L11 22Z" fill="#98acb8" />}</svg>
);
const Reel = () => (
  <svg width="34" height="32" viewBox="0 0 34 32"><ellipse cx="22" cy="20" rx="11" ry="9" fill="#086c78" stroke="#083848" /><ellipse cx="21" cy="17" rx="11.500" ry="9" fill="#18a8a0" /><ellipse cx="21" cy="17" rx="7.500" ry="6.500" fill="#98d048" /><ellipse cx="21" cy="17" rx="5.500" ry="4.500" fill="#0c7484" /><ellipse cx="21" cy="17" rx="2.500" ry="2" fill="#d4e070" /><path d="M1 6 10 2 16 7 8 11Z" fill="#20b8b0" /><path d="M2 13 9 20 16 26" stroke="#182850" strokeWidth="5" /><path d="M3 14 9 20 16 26" stroke="#c0d4f4" strokeWidth="2.500" strokeDasharray="2 2" /></svg>
);
const tasks: React.ReactNode[] = [
  <svg key="shell" width="34" height="32" viewBox="0 0 34 32"><path d="M9 26Q0 22 2 12 4 8 8 6 12 1 17 3 23 1 27 7 33 10 32 18L25 27Z" fill="#fcdc9c" /><path d="M14 27 3 13M14 27 8 6M15 27 17 4M16 27 26 7M17 27 31 15" stroke="#e4a458" strokeWidth="1.500" /><path d="M21 11 24 18 31 17 26 22 29 29 22 26 16 31 17 23 11 19 18 18Z" fill="#f49030" stroke="#c05810" /></svg>,
  <svg key="note" width="26" height="30" viewBox="0 0 26 30"><rect x="1" y="2" width="24" height="27" rx="2" fill="#f4faff" /><path d="M4 6H22M4 9H22M4 12H22M4 15H22M4 18H22M4 21H22M4 24H22" stroke="#3898c0" strokeWidth="1.500" /></svg>,
  <svg key="g" width="32" height="32" viewBox="0 0 32 32"><path d="M28 2 29 8 16 11 9 16 8 23 12 26H20L21 21H16L18 15H29L26 26 20 30H6L2 25V15L8 9 18 4 27 5Z" fill="#e0281c" stroke="#a01008" /></svg>,
  <Leaf key="l1" />,
  <Leaf key="l2" speck />,
  <svg key="disk" width="32" height="34" viewBox="0 0 32 34"><path d="M1 1H29L31 4V33H1Z" fill="#1c38d0" /><rect x="8" y="1" width="15" height="11" fill="#c8ccd4" /><rect x="16" y="2" width="4" height="9" fill="#1c38d0" /><rect x="4" y="15" width="24" height="17" fill="#fff" /><path d="M6 19H26M6 23H26M6 27H15" stroke="#c03030" strokeWidth="1.500" /><text x="16" y="31" fontSize="8" fontFamily="Liberation Mono, monospace" fontWeight="bold">64</text></svg>,
  <svg key="wing" width="28" height="28" viewBox="0 0 28 28"><rect width="28" height="28" rx="5" fill="#1488fc" /><path d="M8 4Q18 8 20 13 22 16 19 18L16 24 14 23 15 19 11 17 13 16 9 12 11 11Z" fill="#fff" /></svg>,
  <Reel key="r1" />,
  <svg key="x" width="34" height="32" viewBox="0 0 34 32"><path d="M3 2H11L31 30H23Z" fill="#780c80" stroke="#fff" /><path d="M29 2 4 30" stroke="#fff" strokeWidth="3.500" /><path d="M29 2 4 30" stroke="#400850" strokeWidth="2" /></svg>,
  <Reel key="r2" />,
  <svg key="xls" width="32" height="32" viewBox="0 0 32 32"><path d="M2 30V8Q4 2 10 2H24L30 8V30Z" fill="#e8f4e0" stroke="#60a050" /><path d="M5 8H17V22H5Z" fill="#88b878" /><path d="M7 9 16 21M16 9 7 21" stroke="#186828" strokeWidth="3" /><path d="M19 12H28M19 17H28M8 25H28" stroke="#48a040" strokeWidth="4" strokeDasharray="5 1" /></svg>,
];

export default function App() {
  return (
    <Screen>
      <Global />
      <TitleBar>
        <TitleText>
          <svg width="8" height="13" viewBox="6 0 8 13"><rect width="14" height="13" fill="#fff" stroke="#222" /><path d="M3 4 11 11M11 4 3 11" stroke="#b8a800" strokeWidth="2" /></svg>
          <svg width="0" height="1" />
          <svg width="0" height="1" />
          <MenuTitle>Graphic Editor 9.07b2 (00@HY-HYCAM-PC411 - Windows, pid:7116)</MenuTitle>
        </TitleText>
        <CaptionButtons>
          <Caption $w={29}><svg width="12" height="10"><rect x="1" y="3" width="10" height="3" fill="#fff" stroke="#405070" strokeWidth=".5" /></svg></Caption>
          <Caption $w={27}><svg width="12" height="10"><rect x="2" y="-3" width="8" height="8" fill="none" stroke="#fff" strokeWidth="2.500" /></svg></Caption>
          <Caption $w={46}><svg width="12" height="10"><path d="M2-4 10 6M10-4 2 6" stroke="#fff" strokeWidth="2.500" /></svg></Caption>
        </CaptionButtons>
      </TitleBar>
      <WindowFrame>
        <Header>
          <MenuBar>
            <MenuItem $w={24}><u>F</u>ile</MenuItem>
            <MenuItem $w={25}><u>E</u>dit</MenuItem>
            <MenuItem $w={46}><u>A</u>ctions</MenuItem>
            <MenuItem $w={48}>O<u>p</u>tions</MenuItem>
            <MenuItem $w={53}>Analysis</MenuItem>
            <MenuItem $w={32}>DFM</MenuItem>
            <MenuItem $w={29}><u>S</u>tep</MenuItem>
            <MenuItem $w={28}><u>R</u>out</MenuItem>
            <MenuItem $w={57}><u>W</u>indows</MenuItem>
            <MenuItem $w={28} $end>Help</MenuItem>
          </MenuBar>
          <Brand>
            <svg width="160" height="40" viewBox="0 0 160 40">
              <g fill={c.red}><path d="M4 9H14L16 7 20 11 14 12 4 10ZM2 15H14L16 13 20 17 14 18 2 16ZM1 21H14L16 20 19 23 14 24 1 22ZM0 28H12L14 26 17 29 12 31 0 29Z" /></g>
              <text x="18" y="32" fontFamily="Liberation Sans, sans-serif" fontSize="32" fontWeight="bold" fontStyle="italic" fill="#000080" stroke="#000080" strokeWidth=".6" textLength="34" lengthAdjust="spacingAndGlyphs">Fr</text>
              <circle cx="62" cy="23" r="9" fill="#d8f0f0" stroke="#000080" strokeWidth="1.500" />
              <path d="M62 19 66 23 62 27 58 23Z" fill={c.red} />
              <text x="71" y="32" fontFamily="Liberation Sans, sans-serif" fontSize="32" fontWeight="bold" fontStyle="italic" fill="#000080" stroke="#000080" strokeWidth=".6" textLength="87" lengthAdjust="spacingAndGlyphs">ntline</text>
            </svg>
            <BrandTitle><strong>Genesis 2000</strong><em>Graphic Editor</em></BrandTitle>
            <Clock><span>22 Nov 2024</span><span>11:37 PM</span><Pause /></Clock>
          </Brand>
        </Header>

        <Body>
          <Sidebar>
            <InfoBox>Job : 4d0mv00ka0</InfoBox>
            <InfoBox>Step: cam</InfoBox>
            <MatrixWrap><MatrixButton>Job Matrix ...</MatrixButton></MatrixWrap>
            <LayerArea>
              <LayerFrame>
                {layers.map((group, g) => (
                  <LayerGroup key={g}>
                    {group.map(([name, bg]) => (
                      <LayerRow key={name}>
                        <Check $on={name === "cs"} />
                        <Swatch $bg={name === "cs" ? "#3c8c10" : name === "cs.d" ? c.red : "#000"}>
                          {name === "cs" && <svg width="14" height="14"><path d="M2 2H10L8 5 13 11 11 13 5 8 2 10Z" fill="#fff" /></svg>}
                        </Swatch>
                        <LayerName $bg={bg}>
                          {name}
                          {name === "cs" && <svg width="6" height="7"><path d="M.5.5H5.500V6.500H.5ZM3 0V7M0 3.500H6" fill="none" stroke="#000" /></svg>}
                        </LayerName>
                      </LayerRow>
                    ))}
                  </LayerGroup>
                ))}
              </LayerFrame>
            </LayerArea>
            <InfoBox $small $bg={c.orange}>Selected : 1</InfoBox>
          </Sidebar>

          <Canvas>
            <Board />
            <Popup>
              <PopTitle>
                <XIcon size={15} />
                <span>Popview - 1</span>
                <PopClose><svg width="12" height="10" viewBox="0 0 12 10"><path d="M2 1 10 9M10 1 2 9" stroke="#503030" strokeWidth="4" /><path d="M2 1 10 9M10 1 2 9" stroke="#fff" strokeWidth="2.800" /></svg></PopClose>
              </PopTitle>
              <PopBody>
                <PopMain>
                  <PopView><PopArt /></PopView>
                  <PopTools>
                    {["track", "upB", "downB", "leftB", "rightB", "shrinkB", "growB"].map((n) => (
                      <PopTool key={n}><PopToolFace><Icon name={n} size={21} /></PopToolFace></PopTool>
                    ))}
                    <PopFill />
                  </PopTools>
                </PopMain>
                <CloseRow><CloseButton>Close</CloseButton></CloseRow>
              </PopBody>
            </Popup>
          </Canvas>

          <Right>
            <ToolGrid $kind="view">{viewTools.map(([n, t]) => <Tool key={n} $t={t}><Icon name={n} /></Tool>)}</ToolGrid>
            <ToolGrid $kind="edit">{editTools.map(([n, t]) => <Tool key={n} $t={t}><Icon name={n} /></Tool>)}</ToolGrid>
            <MiniMap>
              <MiniBoard>
                <svg width="158" height="92" viewBox="1751 658 158 92" shapeRendering="crispEdges">
                  <path d="M1775 741V687H1817V741" fill="none" stroke="#30e0e8" strokeWidth="2" />
                  <path d="M1776 740H1817" stroke="#b0b0b0" strokeWidth="2" />
                  <path d="M1775 690H1779V694H1775ZM1813 691H1817V695H1813ZM1775 731H1779V736H1775Z" fill="#30e0e8" />
                  <path d="M1817 724H1814V728H1817" fill="none" stroke="#b0b0b0" strokeWidth="2" />
                  <path d="M1772 737 1779 744M1779 737 1772 744" stroke="#c0c0c0" />
                </svg>
              </MiniBoard>
            </MiniMap>
            <Coords>{'X = 2.395870"\nY = 2.569327"'}</Coords>
          </Right>
        </Body>

        <Prompt>
          <PromptTool $w={25} $edge><PromptFace $w={28}><svg width="18" height="20" viewBox="0 0 18 20"><rect x=".5" y=".5" width="17" height="19" fill="none" stroke="#000" /><path d="M3 4 14 15M3 8V4H7M14 11V15H10" fill="none" stroke="#000" /></svg></PromptFace></PromptTool>
          <PromptTool $w={32}><PromptFace $w={28}><svg width="19" height="20" viewBox="0 0 19 20"><rect x=".5" y=".5" width="18" height="19" fill="none" stroke="#000" /><path d="M3 17 15 4M5 4V8H8M4 14 7 17M12 13H16V16H12Z" fill="none" stroke="#000" /></svg></PromptFace></PromptTool>
          <PromptTool $w={29} $bg={c.tealMid}><PromptFace $w={24}><svg width="16" height="18" viewBox="0 0 16 18"><path d="M.5 4.500 4.500.5H15.500V17.500H.5ZM8.500 3V15M3 9.500H14M3.500 6V15H13V3.500H6Z" fill="none" stroke="#000" /></svg></PromptFace></PromptTool>
          <PromptLabel>X Y :</PromptLabel>
          <PromptTool $w={178}><Entry><Caret /></Entry></PromptTool>
          <PromptTool $w={29} $bg={c.tealMid}><PromptFace $w={24}><svg width="16" height="18" viewBox="0 0 16 18"><rect x=".5" y=".5" width="15" height="17" fill="none" stroke="#000" /><path d="M8 3V11M8 13V15" stroke="#000" strokeWidth="2" /></svg></PromptFace></PromptTool>
          <PromptText>{"<M1> - Select first area corner"}</PromptText>
          <UnitWrap><Unit>Inch<UnitMark /></Unit></UnitWrap>
        </Prompt>
        <StatusFrame>
          <Status><StatusInner>cs,#1,Pad(.smd),X=0.26812,Y=0.50703,rect41.8x31.8,POS</StatusInner></Status>
        </StatusFrame>
      </WindowFrame>

      <Taskbar>
        <Orb>
          <svg width="38" height="38" viewBox="0 0 38 38">
            <defs><radialGradient id="orb" cx=".5" cy=".95" r=".9"><stop offset="0" stopColor="#40d8ff" /><stop offset=".45" stopColor="#1868a8" /><stop offset="1" stopColor="#8498ac" /></radialGradient></defs>
            <circle cx="19" cy="19" r="18" fill="url(#orb)" stroke="#7c98b4" />
            <path d="M11 10Q15 7 19 10L17 18Q13 15 9 18Z" fill="#f05820" /><path d="M20 11Q25 13 29 10L27 18Q22 20 18 18Z" fill="#88c030" />
            <path d="M8 19Q12 16 16 19L14 27Q10 24 6 27Z" fill="#40a0f0" /><path d="M18 20Q22 22 26 20L24 28Q19 30 16 27Z" fill="#fcc828" />
          </svg>
        </Orb>
        {tasks.map((pic, i) => <Task key={i} $active={i === 8} $stack={i === 8 || i === 10}>{pic}</Task>)}
        <Tray>
          <svg width="160" height="38" viewBox="1664 1041 160 38">
            <rect x="1666" y="1053" width="15" height="9" rx="1" fill="#d8dcdc" /><path d="M1668 1056H1679M1668 1059H1679M1668 1051Q1672 1047 1675 1051L1679 1048" fill="none" stroke="#808890" strokeDasharray="2 .6" />
            <circle cx="1695" cy="1057" r="7.500" fill="#1830b0" stroke="#c0c8e0" /><text x="1695" y="1062" textAnchor="middle" fontSize="13" fontWeight="bold" fill="#fff" fontFamily="Liberation Sans, sans-serif">?</text>
            <path d="M1715.500 1049.500H1720.500V1052.500H1715.500ZM1713.500 1051.500H1718.500V1055.500H1713.500Z" fill="#0a2c50" stroke="#fff" /><path d="M1714 1062H1720L1717 1065ZM1731 1063H1739L1735 1059Z" fill="#fff" />
            <path d="M1752 1067 1763 1055V1063L1758 1067Z" fill="#e01010" /><path d="M1761 1059 1768 1067H1765L1760 1061Z" fill="#10d020" />
            <path d="M1783.500 1054V1068" stroke="#fff" /><path d="M1785 1055H1791L1792 1057H1797V1063H1785Z" fill="#fff" /><circle cx="1793" cy="1064" r="4.500" fill="#d82020" /><path d="M1791 1062 1795 1066M1795 1062 1791 1066" stroke="#fff" strokeWidth="1.500" />
            <path d="M1811 1057.500H1820.500V1065.500H1811.500V1058M1813 1068H1820M1816 1066V1068M1807.500 1054V1058H1811.500V1054M1809.500 1059V1067H1812" fill="none" stroke="#fff" strokeWidth="1.500" />
          </svg>
          <TrayTime>23:41<br />2024/11/22</TrayTime>
          <ShowDesktop />
        </Tray>
      </Taskbar>
    </Screen>
  );
}

const MenuTitle = styled.span`
  margin-left: -10px;
  letter-spacing: 0.02px;
`;
